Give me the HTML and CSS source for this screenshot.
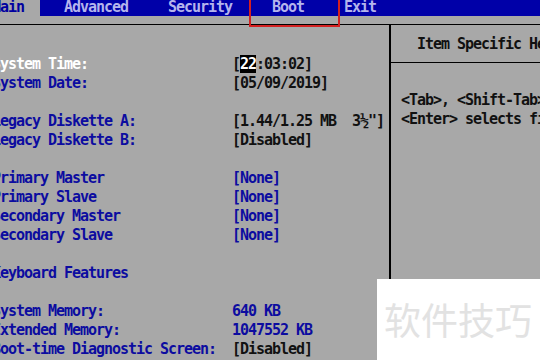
FILE: index.html
```html
<!DOCTYPE html>
<html>
<head>
<meta charset="utf-8">
<link rel="stylesheet" href="styles.css">
</head>
<body>
<div class="screen">
  <div class="header">
    <nav class="tabs">
      <span class="tab active">Main</span>
      <span class="tab">Advanced</span>
      <span class="tab">Security</span>
      <span class="tab">Boot</span>
      <span class="tab">Exit</span>
    </nav>
  </div>
  <div class="body">
    <section class="settings">
      <div class="row"><span class="label current">System Time:</span><span class="value dark">[<span class="cursor">22</span>:03:02]</span></div>
      <div class="row"><span class="label">System Date:</span><span class="value dark">[05/09/2019]</span></div>
      <div class="row blank"></div>
      <div class="row"><span class="label">Legacy Diskette A:</span><span class="value dark">[1.44/1.25 MB  3½"]</span></div>
      <div class="row"><span class="label">Legacy Diskette B:</span><span class="value dark">[Disabled]</span></div>
      <div class="row blank"></div>
      <div class="row"><span class="label">Primary Master</span><span class="value">[None]</span></div>
      <div class="row"><span class="label">Primary Slave</span><span class="value">[None]</span></div>
      <div class="row"><span class="label">Secondary Master</span><span class="value">[None]</span></div>
      <div class="row"><span class="label">Secondary Slave</span><span class="value">[None]</span></div>
      <div class="row blank"></div>
      <div class="row"><span class="label">Keyboard Features</span></div>
      <div class="row blank"></div>
      <div class="row"><span class="label">System Memory:</span><span class="value">640 KB</span></div>
      <div class="row"><span class="label">Extended Memory:</span><span class="value">1047552 KB</span></div>
      <div class="row"><span class="label">Boot-time Diagnostic Screen:</span><span class="value dark">[Disabled]</span></div>
    </section>
    <aside class="help">
      <div class="help-title">Item Specific Help</div>
      <div class="help-text">
        <div class="line">&lt;Tab&gt;, &lt;Shift-Tab&gt;, or</div>
        <div class="line">&lt;Enter&gt; selects field.</div>
      </div>
    </aside>
  </div>
  <div class="highlight-box"></div>
  <div class="watermark">软件技巧</div>
</div>
</body>
</html>
```
FILE: styles.css
```css
html, body {
  margin: 0;
  padding: 0;
  width: 540px;
  height: 360px;
  overflow: hidden;
  background: #a8a8a8;
}

.screen {
  position: relative;
  width: 540px;
  height: 360px;
  overflow: hidden;
  font-family: "DejaVu Sans Mono", "Liberation Mono", monospace;
  font-weight: bold;
  font-size: 15px;
  letter-spacing: -1.03px;
}

.header {
  height: 24px;
}

.tabs {
  display: flex;
  gap: 8px;
  height: 16px;
  line-height: 15px;
  background: #0000a8;
  margin-left: -24px;
}

.tab {
  padding: 0 16px;
  color: #b4b4ec;
  white-space: pre;
}

.tab.active {
  background: #a8a8a8;
  color: #0000a0;
}

.body {
  display: flex;
  border-top: 1px solid #000;
  height: 335px;
}

.settings {
  width: 397px;
  margin-left: -8px;
  padding-top: 30px;
  flex: none;
}

.row {
  display: grid;
  grid-template-columns: 240px auto;
  height: 19px;
  line-height: 19px;
}

.label,
.value {
  white-space: pre;
}

.label {
  color: #0c0ca0;
}

.label.current {
  color: #ffffff;
}

.value {
  color: #0c0ca0;
}

.value.dark {
  color: #111111;
}

.cursor {
  background: #000;
  color: #fff;
}

.help {
  flex: 1;
  border-left: 2px solid #000;
  color: #111;
  white-space: nowrap;
}

.help-title {
  padding: 10px 0 0 26px;
  height: 27px;
  line-height: 19px;
  border-bottom: 1px solid #000;
}

.help-text {
  padding: 28px 0 0 10px;
}

.help-text .line {
  height: 19px;
  line-height: 19px;
}

.highlight-box {
  position: absolute;
  left: 249px;
  top: -4px;
  width: 87px;
  height: 27px;
  border: 2px solid #d42020;
}

.watermark {
  position: absolute;
  left: 377px;
  top: 279px;
  width: 163px;
  height: 81px;
  background: #ffffff;
  color: #e2e2e2;
  font-family: "Noto Sans CJK SC", sans-serif;
  font-weight: normal;
  font-size: 37px;
  letter-spacing: 0;
  line-height: 81px;
  padding-left: 7px;
  box-sizing: border-box;
}
```
